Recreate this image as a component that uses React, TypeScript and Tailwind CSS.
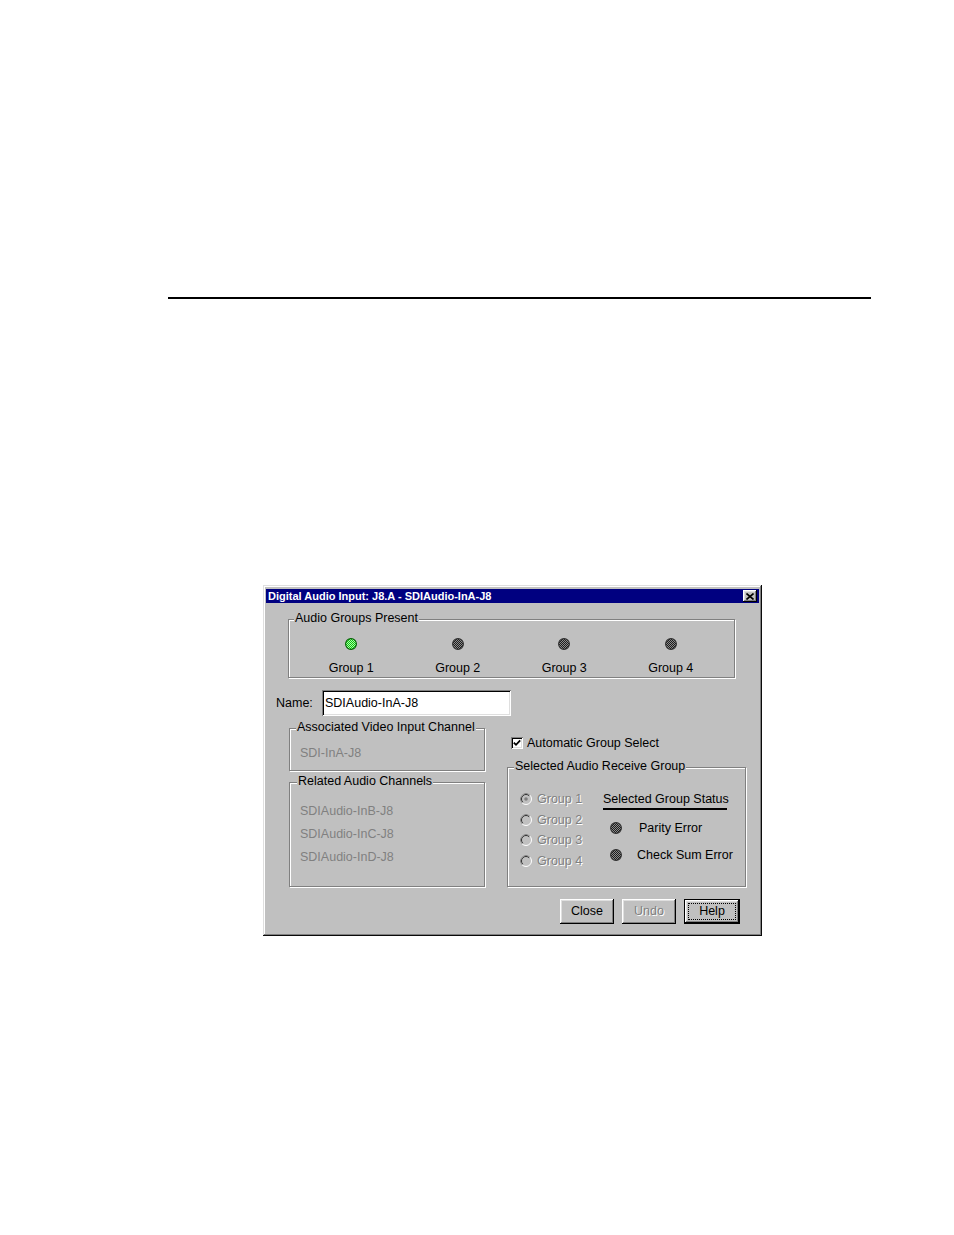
import React from "react";

const raised =
  "shadow-[inset_-1px_-1px_#000,inset_1px_1px_#fff,inset_-2px_-2px_#808080,inset_2px_2px_#dfdfdf]";
const etched =
  "relative border border-[#808080] shadow-[inset_1px_1px_0_#fff,1px_1px_0_#fff]";
const legend = "absolute -top-[9px] px-[1px] bg-[#c0c0c0] leading-[14px] whitespace-nowrap";
const disabled = "text-[#808080] [text-shadow:1px_1px_0_#fff]";

function Led({ on, id }: { on?: boolean; id: string }) {
  return (
    <svg width="12" height="12" viewBox="0 0 12 12">
      <defs>
        <pattern id={id} width="2" height="2" patternUnits="userSpaceOnUse">
          <rect width="2" height="2" fill={on ? "#10c010" : "#1c1c1c"} />
          <rect width="1" height="1" fill={on ? "#a8ffa8" : "#8c8c8c"} />
          <rect x="1" y="1" width="1" height="1" fill={on ? "#a8ffa8" : "#8c8c8c"} />
        </pattern>
      </defs>
      <circle cx="6" cy="6" r="5.4" fill={`url(#${id})`} stroke={on ? "#006000" : "#303030"} strokeWidth="1.1" />
    </svg>
  );
}

function Radio({ checked }: { checked?: boolean }) {
  return (
    <svg width="12" height="12" viewBox="0 0 12 12">
      <circle cx="6" cy="6" r="5.5" fill="#c0c0c0" stroke="#fff" />
      <path d="M2.1 9.9 A5.5 5.5 0 0 1 9.9 2.1" stroke="#808080" fill="none" />
      <path d="M2.8 9.2 A4.5 4.5 0 0 1 9.2 2.8" stroke="#303030" fill="none" />
      {checked && <circle cx="6" cy="6" r="1.8" fill="#808080" />}
    </svg>
  );
}

function Button({ children, off, focus }: { children: string; off?: boolean; focus?: boolean }) {
  if (focus) {
    return (
      <div className="w-[56px] h-[25px] border border-black bg-[#c0c0c0]">
        <div className={`w-full h-full p-[3px] ${raised}`}>
          <div className="w-full h-full border border-dotted border-black flex items-center justify-center leading-none">
            {children}
          </div>
        </div>
      </div>
    );
  }
  return (
    <div
      className={`w-[54px] h-[25px] bg-[#c0c0c0] flex items-center justify-center leading-none ${raised} ${
        off ? disabled : ""
      }`}
    >
      {children}
    </div>
  );
}

export default function App() {
  return (
    <div className="w-[954px] h-[1235px] bg-white pt-[297px] font-['Liberation_Sans',Arial,sans-serif] text-[12.5px] text-black">
      <div className="ml-[168px] w-[703px] h-[2px] bg-black" />

      <div className="mt-[286px] ml-[263px] w-[499px] h-[351px] bg-[#c0c0c0] pt-[4px] px-[3px] shadow-[inset_-1px_-1px_#0a0a0a,inset_1px_1px_#dfdfdf,inset_-2px_-2px_#808080,inset_2px_2px_#fff]">
        {/* title bar */}
        <div className="h-[14px] bg-[#000080] flex items-center justify-between pl-[2px] pr-[2px]">
          <span className="text-white font-bold text-[11px] leading-none">
            Digital Audio Input: J8.A - SDIAudio-InA-J8
          </span>
          <div className={`w-[14px] h-[12px] bg-[#c0c0c0] flex items-center justify-center ${raised}`}>
            <svg width="8" height="7" viewBox="0 0 8 7">
              <path d="M0.5 0.5 L7.5 6.5 M7.5 0.5 L0.5 6.5" stroke="#000" strokeWidth="1.6" />
            </svg>
          </div>
        </div>

        {/* Audio Groups Present */}
        <div className={`mt-[16px] ml-[22px] w-[447px] h-[59px] ${etched}`}>
          <span className={`${legend} left-[5px]`}>Audio Groups Present</span>
          <div className="grid grid-cols-4 pl-[9px] pr-[10px] pt-[18px]">
            {["Group 1", "Group 2", "Group 3", "Group 4"].map((g, i) => (
              <div key={g} className="flex flex-col items-center">
                <Led on={i === 0} id={`led-top-${i}`} />
                <span className="mt-[11px] leading-[14px]">{g}</span>
              </div>
            ))}
          </div>
        </div>

        {/* Name */}
        <div className="mt-[12px] ml-[10px] flex items-center">
          <span className="w-[46px] leading-[14px]">Name:</span>
          <div className="w-[189px] h-[26px] bg-white pl-[3px] flex items-center shadow-[inset_1px_1px_#808080,inset_-1px_-1px_#fff,inset_2px_2px_#000,inset_-2px_-2px_#dfdfdf]">
            SDIAudio-InA-J8
          </div>
        </div>

        <div className="mt-[12px] flex">
          {/* left column */}
          <div className="ml-[23px] w-[196px]">
            <div className={`h-[43px] ${etched}`}>
              <span className={`${legend} left-[6px]`}>Associated Video Input Channel</span>
              <div className="pt-[17px] pl-[10px] leading-[14px] text-[#808080]">SDI-InA-J8</div>
            </div>
            <div className={`mt-[11px] h-[105px] ${etched}`}>
              <span className={`${legend} left-[7px]`}>Related Audio Channels</span>
              <div className="pt-[21px] pl-[10px] flex flex-col gap-[9px] leading-[14px] text-[#808080]">
                <span>SDIAudio-InB-J8</span>
                <span>SDIAudio-InC-J8</span>
                <span>SDIAudio-InD-J8</span>
              </div>
            </div>
          </div>

          {/* right column */}
          <div className="ml-[22px] w-[239px]">
            <div className="mt-[9px] ml-[4px] h-[11px] flex items-center">
              <div className="w-[12px] h-[12px] bg-white flex items-center justify-center shadow-[inset_1px_1px_#808080,inset_-1px_-1px_#fff,inset_2px_2px_#000,inset_-2px_-2px_#dfdfdf]">
                <svg width="8" height="8" viewBox="0 0 8 8">
                  <path d="M0.8 3.6 L3 5.8 L7.2 1.4" stroke="#000" strokeWidth="1.8" fill="none" />
                </svg>
              </div>
              <span className="ml-[4px] leading-[14px]">Automatic Group Select</span>
            </div>

            <div className={`mt-[19px] h-[120px] ${etched}`}>
              <span className={`${legend} left-[6px]`}>Selected Audio Receive Group</span>
              <div className="flex pt-[24px]">
                <div className="w-[95px] pl-[12px] flex flex-col gap-[6.5px]">
                  {["Group 1", "Group 2", "Group 3", "Group 4"].map((g, i) => (
                    <div key={g} className="h-[14px] flex items-center">
                      <Radio checked={i === 0} />
                      <span className={`ml-[5px] leading-[14px] ${disabled}`}>{g}</span>
                    </div>
                  ))}
                </div>
                <div className="flex flex-col">
                  <span className="leading-[14px]">Selected Group Status</span>
                  <div className="mt-[2px] w-[124px] h-[2px] bg-black" />
                  <div className="mt-[11px] h-[14px] flex items-center">
                    <span className="ml-[7px]">
                      <Led id="led-parity" />
                    </span>
                    <span className="ml-[17px] leading-[14px]">Parity Error</span>
                  </div>
                  <div className="mt-[13px] h-[14px] flex items-center">
                    <span className="ml-[7px]">
                      <Led id="led-checksum" />
                    </span>
                    <span className="ml-[15px] leading-[14px]">Check Sum Error</span>
                  </div>
                </div>
              </div>
            </div>
          </div>
        </div>

        {/* buttons */}
        <div className="mt-[12px] pr-[19px] flex justify-end gap-[8px]">
          <Button>Close</Button>
          <Button off>Undo</Button>
          <Button focus>Help</Button>
        </div>
      </div>
    </div>
  );
}
